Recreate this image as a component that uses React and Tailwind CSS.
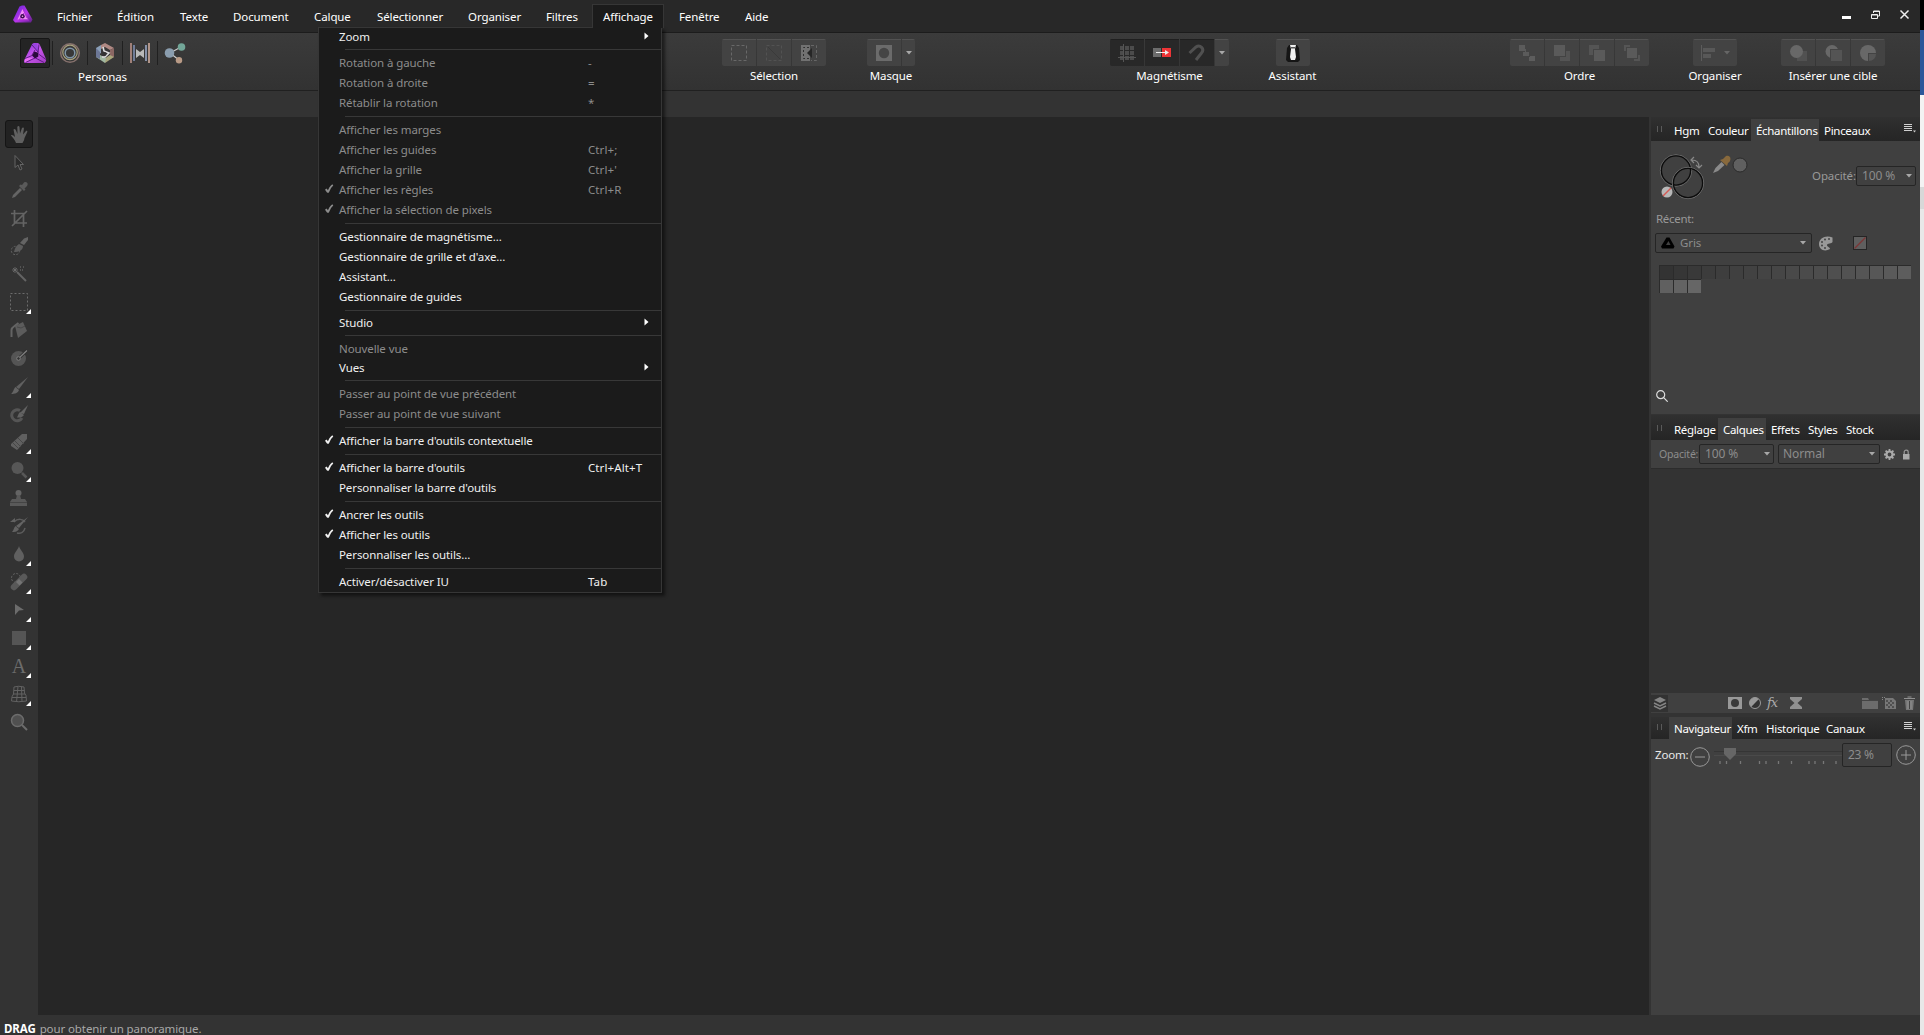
import React from "react";

const MENUS = [
  ["Fichier", "w-[60px]"], ["Édition", "w-[63px]"], ["Texte", "w-[53px]"], ["Document", "w-[81px]"],
  ["Calque", "w-[63px]"], ["Sélectionner", "w-[91px]"], ["Organiser", "w-[78px]"], ["Filtres", "w-[46px]"],
];

const VIEW_MENU = [
  { t: "Zoom", sub: true }, null,
  { t: "Rotation à gauche", k: "-", off: true },
  { t: "Rotation à droite", k: "=", off: true },
  { t: "Rétablir la rotation", k: "*", off: true }, null,
  { t: "Afficher les marges", off: true },
  { t: "Afficher les guides", k: "Ctrl+;", off: true },
  { t: "Afficher la grille", k: "Ctrl+'", off: true },
  { t: "Afficher les règles", k: "Ctrl+R", off: true, on: true },
  { t: "Afficher la sélection de pixels", off: true, on: true }, null,
  { t: "Gestionnaire de magnétisme..." },
  { t: "Gestionnaire de grille et d'axe..." },
  { t: "Assistant..." },
  { t: "Gestionnaire de guides" }, null,
  { t: "Studio", sub: true }, null,
  { t: "Nouvelle vue", off: true },
  { t: "Vues", sub: true }, null,
  { t: "Passer au point de vue précédent", off: true },
  { t: "Passer au point de vue suivant", off: true }, null,
  { t: "Afficher la barre d'outils contextuelle", on: true }, null,
  { t: "Afficher la barre d'outils", k: "Ctrl+Alt+T", on: true },
  { t: "Personnaliser la barre d'outils" }, null,
  { t: "Ancrer les outils", on: true },
  { t: "Afficher les outils", on: true },
  { t: "Personnaliser les outils..." }, null,
  { t: "Activer/désactiver IU", k: "Tab" },
];

function Check() {
  return (
    <svg width="9" height="10" viewBox="0 0 9 10" fill="none" stroke="currentColor">
      <path d="M0.8 5.2 3 8.2" strokeWidth="2" />
      <path d="M3 8.6C4 5 5.5 2.5 7.8 0.8" strokeWidth="1.6" />
    </svg>
  );
}

function DropMenu() {
  return (
    <div className="absolute left-[318px] top-[27px] z-10 w-[344px] border border-[#363636] bg-[#1b1b1b] shadow-[3px_3px_3px_rgba(0,0,0,0.5)]">
      {VIEW_MENU.map((m, i) =>
        m ? (
          <div key={i} className={`flex items-center pl-[6px] ${m.sub ? "h-[18px]" : "h-5"} ${m.off ? "text-[#8c8c8c]" : "text-[#f0f0f0]"}`}>
            <span className="w-[14px] -mt-[3px]">{m.on && <Check />}</span>
            <span className="-mt-px w-[249px]">{m.t}</span>
            {m.k && <span className="-mt-px tracking-[0.1px]">{m.k}</span>}
            {m.sub && (
              <svg className="ml-[56px] -mt-[3px]" width="5" height="8" viewBox="0 0 5 8"><path d="M0.5 0.5 4.5 4 0.5 7.5Z" fill="#fff" /></svg>
            )}
          </div>
        ) : (
          <div key={i} className="h-[7px] pl-[26px] pt-[3px]"><div className="h-px bg-[#383838]" /></div>
        )
      )}
    </div>
  );
}

function Logo({ size, id }) {
  return (
    <svg width={size} height={size} viewBox="0 0 24 24">
      <defs>
        <linearGradient id={id} x1="0" y1="0" x2="0.9" y2="1">
          <stop offset="0" stopColor="#7d2fd8" /><stop offset="0.5" stopColor="#c856ec" /><stop offset="1" stopColor="#a43cc4" />
        </linearGradient>
      </defs>
      <path d="M9 3.500Q9.500 2 11 2h3.500q1.500 0 2.200 1.500L23 18q.5 1.500-.5 3l-1 1H2.500Q1 22 1 20.500q0-1 .5-2Z" fill={`url(#${id})`} />
      <path d="M9 3.500 16 12l-2-10Z" fill="#9a44e0" />
      <path d="M2 22l8-5-8 0Z" fill="#e86cf5" />
      <path d="M9 4 15.500 11.500M16 3.500 15 11M23 18.500 15.500 13M21 21.500l-8.500-4.500M2.500 21.500l9.500-4.500M2 17.500l7-3M9 14 12 9" stroke="#46106e" strokeWidth="0.8" />
      <path d="M11.500 10.500 15.300 11.800 15.300 15.500 12 17.500 9 14.500Z" fill="#2a0a3c" />
    </svg>
  );
}

function AppLogo() {
  return (
    <svg width="22" height="20" viewBox="0 0 22 20">
      <defs>
        <linearGradient id="al" x1="0" y1="0" x2="1" y2="1">
          <stop offset="0" stopColor="#5a22d8" /><stop offset="0.55" stopColor="#b936ea" /><stop offset="1" stopColor="#5b1e83" />
        </linearGradient>
      </defs>
      <path d="M7.5 1.5 10 0.5h2.5l8 14-1.5 3H3L1 15Z" fill="url(#al)" />
      <path d="M10.5 4 16 14.5H5.500Z" fill="#f08cf5" />
      <path d="m7 15 5-7M17 15H8M11 4l4 9" stroke="#b02bd8" strokeWidth="1" />
      <circle cx="10.5" cy="11.3" r="2.2" fill="#3a0b52" /><circle cx="10.5" cy="11.3" r="0.8" fill="#f3a4e8" />
    </svg>
  );
}

function Personas() {
  const sep = <div className="h-6 w-px bg-[#202020]" />;
  return (
    <div className="ml-5 mt-[5px] w-[172px]">
      <div className="flex h-[30px] items-center">
        <div className="mr-[2px] flex size-[30px] items-center justify-center rounded-[2px] border border-[#161616] bg-[#242424]"><Logo size={24} id="pl" /></div>
        {sep}
        <div className="flex w-[34px] justify-center">
          <svg width="22" height="22" viewBox="0 0 22 22" fill="none">
            <circle cx="11" cy="11" r="9.3" stroke="#86716d" strokeWidth="1.5" />
            <circle cx="11" cy="10.4" r="7.2" stroke="#a9a27e" strokeWidth="1.2" />
            <circle cx="11" cy="11" r="4.8" stroke="#7f95a6" strokeWidth="1.5" />
          </svg>
        </div>
        {sep}
        <div className="flex w-[34px] justify-center">
          <svg width="20" height="22" viewBox="0 0 20 22">
            <path d="M1 6 6 3v8L1 14Z" fill="#8ba0b8" /><path d="M6 3 10 1l9 5-4 2-5-3-4 2Z" fill="#b08a84" />
            <path d="M19 6v9l-4 2V8Z" fill="#8b6763" /><path d="M19 15l-9 6-1-4 6-4Z" fill="#a9a67c" />
            <path d="M1 15l4-2 6 3-1 5Z" fill="#a0b8a2" /><path d="M1 6v9l4 2v-7Z" fill="#6c7796" />
            <path d="m8 5 1 4 5 2-4 4-3 0" stroke="#ddd" strokeWidth="1.600" fill="none" /><circle cx="9.500" cy="12" r="2" fill="#333" />
          </svg>
        </div>
        {sep}
        <div className="flex w-[34px] justify-center">
          <svg width="22" height="20" viewBox="0 0 22 20">
            <path d="M1 0h2v20H1Z" fill="#a08078" /><path d="M4 2h2v16H4Z" fill="#707c98" /><path d="M16 2h2v16h-2Z" fill="#8590a8" /><path d="M19 0h2v20h-2Z" fill="#b09488" />
            <path d="M7 6 11 9l4-3v9l-4-3-4 3Z" fill="#b9b9b9" />
          </svg>
        </div>
        {sep}
        <div className="flex w-[34px] justify-center">
          <svg width="22" height="22" viewBox="0 0 22 22">
            <path d="M6 11 17 5M6 11l9 7" stroke="#ccc" strokeWidth="1.2" />
            <circle cx="5.500" cy="11" r="4.8" fill="#8a9dae" /><circle cx="17.500" cy="5" r="3.8" fill="#72a698" /><circle cx="15" cy="18.300" r="3.2" fill="#b89a86" />
          </svg>
        </div>
      </div>
      <div className="mt-[1px] w-[165px] text-center leading-4">Personas</div>
    </div>
  );
}

function Group({ label, children, className }) {
  return (
    <div className={`mt-[6px] flex flex-col items-center ${className}`}>
      <div className="flex h-[27px] gap-px overflow-hidden rounded-[2px]">{children}</div>
      <div className="mt-[2px] whitespace-nowrap leading-4">{label}</div>
    </div>
  );
}

const LIT = "flex h-[27px] items-center justify-center border-t border-[#525252] bg-[#434343]";
const SUNK = "flex h-[27px] items-center justify-center border-t border-[#1f1f1f] bg-[#282828]";
const B34 = "w-[34px] ";
const Arrow = ({ c = "#a8a8a8" }) => (
  <svg width="6" height="4" viewBox="0 0 6 4"><path d="M0 0h6L3 3.5Z" fill={c} /></svg>
);
const I = ({ children, w = 18 }) => (
  <svg width={w} height="18" viewBox={`0 0 ${w} 18`} fill="none">{children}</svg>
);

function Toolbar() {
  return (
    <div className="flex h-[58px] border-b border-[#202020] bg-gradient-to-b from-[#3b3b3b] to-[#323232] text-white">
      <Personas />
      <Group label="Sélection" className="ml-[530px] w-[104px]">
        <div className={B34 + LIT}><I><rect x="1.500" y="1.500" width="15" height="15" stroke="#686868" strokeDasharray="3 2" /></I></div>
        <div className={B34 + LIT}><I><rect x="1.500" y="1.500" width="15" height="15" stroke="#525252" strokeDasharray="3 2" /><path d="m3 3 12 12" stroke="#3a3a3a" /></I></div>
        <div className={B34 + LIT}><I><path d="M1 1h9v16H1Z" fill="#717171" /><path d="M9 3.500H3.500v11H9" stroke="#303030" strokeDasharray="2 2" /><path d="M12 4v10L7 9Z" fill="#262626" /><path d="M11 1.500h5.500v15H11" stroke="#666" strokeDasharray="3 2" /></I></div>
      </Group>
      <Group label="Masque" className="ml-[40px] w-[50px]">
        <div className={B34 + LIT}><I><path d="M1 1h16v16H1Z" fill="#6b6b6b" /><circle cx="9" cy="9" r="5.2" fill="#454545" /></I></div>
        <div className={"w-[13px] " + LIT}><Arrow /></div>
      </Group>
      <Group label="Magnétisme" className="ml-[194px] w-[119px]">
        <div className={B34 + SUNK}><I><path d="M2 2h4v4H2ZM7 2h4v4H7ZM12 2h4v4h-4ZM2 7h4v4H2ZM7 7h4v4H7ZM12 7h4v4h-4ZM2 12h4v4H2ZM7 12h4v4H7ZM12 12h4v4h-4Z" fill="#4c4c4c" /><path d="M5.500 0v18M0 13.500h18" stroke="#555" /></I></div>
        <div className={B34 + SUNK}><I><path d="M0 4h8v9H0Z" fill="#6c6c6c" /><path d="M9 4h9v9H9Z" fill="#ee3436" /><path d="M3 8.500h10" stroke="#eee" /><path d="M12 6v5l4-2.500Z" fill="#eee" /></I></div>
        <div className={B34 + SUNK}><I><path d="m1.500 9 6.500-6c4-3 9 2 5.500 6L8 16" stroke="#505050" strokeWidth="3" /></I></div>
        <div className={"w-[14px] " + LIT}><Arrow /></div>
      </Group>
      <Group label="Assistant" className="ml-[46px] w-[35px]">
        <div className={B34 + LIT}><I><path d="M3 4 5 1h8l2 3 1 12-2 2H4l-2-2Z" fill="#151515" /><path d="M6 1h6l-1 4 1 8-1 3H7l-1-3 1-8Z" fill="#efefef" /><path d="M7 3h4v1.500H7Z" fill="#555" /></I></div>
      </Group>
      <Group label="Ordre" className="ml-[200px] w-[139px]">
        <div className={B34 + LIT}><I><path d="M1 1h6v6H1ZM8 5v3h3v4H5V8h2V5Z" fill="#5b5b5b" /><path d="M12 12h5v5h-6v-4h1Z" fill="#5d5d5d" /></I></div>
        <div className={B34 + LIT}><I><path d="M1 1h11v11H1Z" fill="#5a5a5a" /><path d="M13 7h4v10H7v-4h6Z" fill="#545454" /></I></div>
        <div className={B34 + LIT}><I><path d="M1 1h10v4H5v6H1Z" fill="#545454" /><path d="M6 6h11v11H6Z" fill="#5a5a5a" /></I></div>
        <div className={B34 + LIT}><I><path d="M1 1h6v2H3v4H1ZM17 17h-6v-2h4v-4h2Z" fill="#555" /><path d="M4 4h10v10H4Z" fill="#5a5a5a" /></I></div>
      </Group>
      <Group label="Organiser" className="ml-[44px] w-[44px]">
        <div className={"w-[44px] gap-2 " + LIT}><I w={16}><path d="M1.500 1v16" stroke="#5c5c5c" /><path d="M3 4h12v4H3ZM3 10h8v4H3Z" fill="#585858" /></I><Arrow c="#666" /></div>
      </Group>
      <Group label="Insérer une cible" className="ml-[44px] w-[104px]">
        <div className={B34 + LIT}><I><path d="M12 7h6v10H8v-4Z" fill="#515151" /><circle cx="7.500" cy="7.500" r="6.500" fill="#686868" /></I></div>
        <div className={B34 + LIT}><I><circle cx="8" cy="7.500" r="6.500" fill="#686868" /><path d="M6 5h12v12H6Z" fill="#434343" /><path d="M7 6h11v11H7Z" fill="#545454" /></I></div>
        <div className={B34 + LIT}><I><circle cx="9" cy="9" r="8" fill="#686868" /><path d="M9 9h9v8H9Z" fill="#434343" /><path d="M10 10h7a7 7 0 0 1-7 7Z" fill="#555" /></I></div>
      </Group>
    </div>
  );
}

const G = "#646464";
const TOOLS = [
  { p: <path d="M6 18C5 15 2.500 12 1 10.500c1-1 2.500 0 4 1.500L3.500 4.500c1-1 2-.5 2.500 1L7.500 9 7.300 2c.5-1.300 1.900-1.300 2.200 0l.5 6.500L12 3c.7-1 2-.6 1.900.7L13 9.500 16 6c1-.6 1.700.2 1.200 1.200L14.500 13c-.3 2-1 3.500-2 5Z" fill="#606060" /> },
  { p: <path d="M5 2.500v12l3-2.500 2 5 2-1-2-4.500h3.500Z" fill="#2c2c2c" stroke={G} /> },
  { p: <><path d="m2 17 1-3 7-7 2 2-7 7Z" fill={G} /><path d="m9 5 5 5 1.500-1.500-1-1 2.500-2.500c2-3-1-5-3-3.500L12 4l-1.500-.5Z" fill="#5a5a5a" /></> },
  { p: <path d="M4.500 1v13H17M1 4.500h12.500V18M2 17 17 2" stroke={G} strokeWidth="1.700" /> },
  { p: <><circle cx="5.500" cy="13.500" r="4.200" stroke={G} strokeDasharray="2 1.500" /><path d="M18 0v3l-4 5-4-2 4-4.500Z" fill={G} /><path d="M9 7l4 2c0 4-4 6-9 6 1-4 2-6 5-8Z" fill="#5c5c5c" /></> },
  { p: <><path d="m7 7 9 9" stroke={G} strokeWidth="2" /><path d="M5 2v6M2 5h6M3 3l4 4M7 3 3 7" stroke="#707070" strokeWidth=".8" /><path d="M10 2h1M13 2h1M12 5h1M10 5h1" stroke="#777" /></> },
  { p: <rect x="0.500" y="0.500" width="17" height="17" stroke="#6c6c6c" strokeDasharray="2 2" />, c: 1 },
  { p: <><path d="m5 5 8-4 4 9-9 7Z" fill="#5c5c5c" /><path d="M1.500 16V9q0-2 3-4l4-3" stroke={G} strokeWidth="2" /><path d="m7 6 4 1 4-2" stroke="#484848" /></> },
  { p: <><circle cx="8.500" cy="9.500" r="7.500" fill="#555" /><path d="M8.500 9.500 17 1.500" stroke="#2d2d2d" strokeWidth="3" /><path d="M8.500 9.500 17 1.500" stroke="#808080" strokeWidth="1.200" /><circle cx="8.500" cy="9.500" r="1.800" stroke="#808080" fill="#333" /></> },
  { p: <><path d="M18 0 9 12l-3-2Z" fill="#606060" /><path d="M5.500 10 9 13c-1 3-4 4-8 4 2-1 2.500-5 4.500-7Z" fill={G} /></>, c: 1 },
  { p: <><path d="M10 5.500A5.500 5.500 0 1 0 12 13" stroke="#555" strokeWidth="3" /><path d="M18 0 14 9l-4-1Z" fill={G} /><path d="m10 7 4 3c-2 3-4 2.500-7 2.500C8 11 8 9 10 7Z" fill="#626262" /></> },
  { p: <><path d="m1 11 11-10h5v5L7 17 1 13Z" fill="#606060" /><path d="m5 8 6 6M8 5l6 6M3 10l6 6" stroke="#474747" /></>, c: 1 },
  { p: <><circle cx="7.500" cy="7" r="6" fill="#575757" /><path d="m12 12 4.500 4.500" stroke="#575757" strokeWidth="2.500" /></>, c: 1 },
  { p: <><circle cx="8.500" cy="4" r="3" fill={G} /><path d="M7 6h3l1 4h4l2 3v4H0v-4l2-3h4Z" fill="#595959" /><path d="M0 13.500h17" stroke="#444" /></> },
  { p: <><path d="M4 5c4-4 9-3 11 0M15 11c-1 4-4 6-8 5" stroke="#5c5c5c" strokeWidth="1.500" /><path d="M18 0 9 11l-3-2Z" fill={G} /><path d="M5.500 9 9 12c-2 3-4 3-7 3 2-2 1.500-4 3.500-6ZM0 5h5V1Z" fill="#626262" /></> },
  { p: <path d="M9 1c1 4 5 6.500 5 10.500a5 5 0 0 1-10 0C4 7.500 8 5 9 1Z" fill="#606060" />, c: 1 },
  { p: <><circle cx="6" cy="5" r="4.500" stroke={G} strokeDasharray="2 1.500" /><path d="M4 14 14 4" stroke="#595959" strokeWidth="6.500" strokeLinecap="round" /><path d="m6 9 3-3 3.500 3.500-3 3Z" fill="#747474" /></>, c: 1 },
  { p: <path d="m5 3 9 6-5 .5L5 14Z" fill="#6c6c6c" />, c: 1 },
  { p: <path d="M2 2h14v14H2Z" fill="#555" />, c: 1 },
  { t: "A", c: 1 },
  { p: <path d="M4 2q4-1.500 10 0l.5 6q2 1 2 8-8 1.500-15 0 0-5 2-7ZM8 1.500 6.500 17M11.500 1.500 12 17M4 5.500h10.500M3 9h12M2 12.500h14" stroke="#626262" />, c: 1 },
  { p: <><circle cx="7.500" cy="7.500" r="6" fill="#505050" stroke="#6c6c6c" strokeWidth="1.500" /><path d="m12 12 5 5" stroke="#6c6c6c" strokeWidth="2" /></> },
];

function Tools() {
  return (
    <div className="flex w-[38px] flex-col items-center bg-[#333] pt-[3px]">
      {TOOLS.map((t, i) => (
        <div key={i} className={`relative flex size-7 items-center justify-center ${i === 0 ? "rounded-[3px] border border-[#151515] bg-[#222]" : ""}`}>
          {t.t ? (
            <span className="font-['Liberation_Serif'] text-[20px] text-[#6c6c6c]">{t.t}</span>
          ) : (
            <svg className="-mt-px" width="18" height="18" viewBox="0 0 18 18" fill="none">{t.p}</svg>
          )}
          {t.c && <svg className="absolute bottom-[2px] right-[2px]" width="5" height="5" viewBox="0 0 5 5"><path d="M5 0v5H0Z" fill="#fff" /></svg>}
        </div>
      ))}
    </div>
  );
}

function Tabs({ tabs, menu, className }) {
  return (
    <div className={`flex items-end bg-gradient-to-b from-[#303030] to-[#252525] tracking-[-0.3px] text-white ${className}`}>
      <div className="mb-[9px] ml-[6px] flex h-[6px] w-[5px] justify-between"><i className="w-px bg-[#5a5a5a]" /><i className="w-px bg-[#5a5a5a]" /></div>
      <div className="ml-[7px] flex">
        {tabs.map(([n, w, a]) => (
          <div key={n} className={`flex h-[22px] items-center whitespace-nowrap pl-[5px] pt-px ${w} ${a ? "bg-[#404040]" : ""}`}>{n}</div>
        ))}
      </div>
      {menu && (
        <svg className="mb-[8px] ml-auto mr-[4px]" width="12" height="9" viewBox="0 0 12 9"><path d="M0 .5h8M0 2.500h8M0 4.500h8M0 6.500h8" stroke="#d0d0d0" /><path d="M9 6.500h3L10.500 8.500Z" fill="#ccc" /></svg>
      )}
    </div>
  );
}

const BOX = "flex items-center justify-between rounded-[2px] border border-[#252525] bg-[#404040] text-[#8c8c8c]";
const GRAYS = [
  "bg-[#333]", "bg-[#363636]", "bg-[#393939]", "bg-[#3c3c3c]", "bg-[#3e3e3e]", "bg-[#404040]", "bg-[#424242]", "bg-[#444]", "bg-[#464646]",
  "bg-[#494949]", "bg-[#4b4b4b]", "bg-[#4d4d4d]", "bg-[#4f4f4f]", "bg-[#525252]", "bg-[#555]", "bg-[#575757]", "bg-[#5a5a5a]", "bg-[#5d5d5d]",
  "bg-[#606060]", "bg-[#636363]", "bg-[#666]",
];

function Swatches() {
  return (
    <div className="h-[273px] bg-[#404040] text-[#999]">
      <div className="flex h-[62px] pl-2 pt-3">
        <svg width="95" height="48" viewBox="0 0 95 48" fill="none">
          <circle cx="17" cy="17.500" r="15.700" stroke="#707070" /><circle cx="17" cy="17.500" r="14.600" stroke="#0c0c0c" strokeWidth="1.300" />
          <circle cx="29" cy="30" r="15.700" stroke="#707070" /><circle cx="29" cy="30" r="14.600" stroke="#0c0c0c" strokeWidth="1.300" />
          <path d="M33 7c5 0 7 2 7 7M35 4l-3 3 3 3M37 12l3 3 3-3" stroke="#888" strokeWidth="1.200" />
          <circle cx="8" cy="39" r="5.500" fill="#b8b8b8" /><path d="m4 43 8-8" stroke="#d65a55" strokeWidth="1.500" />
          <path d="m54 20 2.500-5 6-6 3 3-6.500 6Z" fill="#8a8a8a" /><path d="m61 7 7 6 1-3c4-2 3-9-2-7l-3 3Z" fill="#88693c" />
          <circle cx="81" cy="12" r="7" fill="#606060" stroke="#2a2a2a" />
        </svg>
        <span className="ml-[58px] mt-[15px] w-[44px] text-[#999]">Opacité:</span>
        <div className={BOX + " mt-[13px] h-5 w-[60px] shrink-0 px-[3px] pl-[5px] text-[12px]"}>100 %<Arrow /></div>
      </div>
      <div className="mt-[8px] h-[22px] pl-[5px] tracking-[-0.3px]">Récent:</div>
      <div className="flex h-5 items-center pl-[4px]">
        <div className={BOX + " h-5 w-[157px] px-[5px]"}>
          <span className="flex items-center gap-[5px]">
            <svg width="14" height="12" viewBox="0 0 14 12"><path d="M5.500.5h3l5 9-1 2H1L0 9.500Z" fill="#000" /><path d="M7.500 4 9.500 8H5Z" fill="#404040" /></svg>
            Gris
          </span>
          <Arrow />
        </div>
        <svg className="ml-[7px]" width="14" height="15" viewBox="0 0 14 15"><path d="M13.500 1.500C7-1.500 0 2 0 8s6 8 11 5c0-2-3-2-3-4s5-1 5.500-3Z" fill="#999" /><g fill="#444"><circle cx="6" cy="3.500" r="1" /><circle cx="3" cy="6" r="1" /><circle cx="3" cy="9.500" r="1" /><circle cx="6" cy="12" r="1" /><circle cx="10" cy="3" r="1" /></g></svg>
        <svg className="ml-5" width="14" height="14" viewBox="0 0 14 14"><rect x=".5" y=".5" width="13" height="13" fill="#5f5f5f" stroke="#252525" /><path d="M1.500 12.500 12.500 1.500" stroke="#7e3434" strokeWidth="1.200" /></svg>
      </div>
      <div className="ml-2 mt-3 flex w-[253px] flex-wrap">
        {GRAYS.map((g) => <div key={g} className={`h-[14px] w-[14px] border-l border-t border-[#2b2b2b] ${g}`} />)}
      </div>
      <svg className="ml-[5px] mt-[97px]" width="12" height="12" viewBox="0 0 12 12" fill="none" stroke="#ddd" strokeWidth="1.200"><circle cx="4.700" cy="4.700" r="4" /><path d="m7.700 7.700 4 4" /></svg>
    </div>
  );
}

const Bi = ({ children, className = "" }) => (
  <svg className={className} width="16" height="14" viewBox="0 0 16 14" fill="none">{children}</svg>
);

function Layers() {
  return (
    <>
      <div className="flex h-[29px] items-center border-b border-[#2c2c2c] bg-[#404040] pl-[8px] text-[#8c8c8c]">
        <span className="w-[40px] text-[10.500px] tracking-[-0.2px]">Opacité:</span>
        <div className={BOX + " h-5 w-[75px] pl-[5px] pr-[3px] text-[12px]"}>100 %<Arrow /></div>
        <div className={BOX + " ml-1 h-5 w-[102px] px-[4px] text-[12px]"}>Normal<Arrow /></div>
        <svg className="ml-[4px]" width="11" height="11" viewBox="0 0 11 11" fill="none"><circle cx="5.500" cy="5.500" r="3" stroke="#aaa" strokeWidth="2.200" /><path d="M5.500 0v2M5.500 9v2M0 5.500h2M9 5.500h2M1.600 1.600 3 3M8 8l1.400 1.400M1.600 9.400 3 8M8 3l1.400-1.400" stroke="#aaa" strokeWidth="1.800" /></svg>
        <svg className="ml-[7px]" width="8" height="11" viewBox="0 0 8 11" fill="none"><path d="M1 5h6.500v5.500H1Z" fill="#aaa" /><path d="M2.200 5V3c0-2.500 4-2.500 4 0v2" stroke="#999" strokeWidth="1.200" /></svg>
      </div>
      <div className="h-[224px] bg-[#333]" />
      <div className="flex h-5 items-center bg-[#404040]">
        <div className="flex h-[17px] w-[17px] items-center justify-center bg-[#323232]"><Bi><path d="m2 4 6-3 6 3-6 3Z" fill="#858585" /><path d="m2 7 6 3 6-3M2 10l6 3 6-3" stroke="#858585" strokeWidth="1.500" /></Bi></div>
        <Bi className="ml-[59px]"><path d="M1 1h14v12H1Z" fill="#999" /><circle cx="8" cy="7" r="4" fill="#3a3a3a" /></Bi>
        <Bi className="ml-[4px]"><circle cx="8" cy="7" r="5.500" stroke="#999" fill="#333" /><path d="M4.100 10.900A5.500 5.500 0 0 1 11.900 3.100Z" fill="#999" /></Bi>
        <span className="ml-[4px] w-[16px] font-['DejaVu_Serif'] text-[13px] italic leading-4 tracking-[-1px] text-[#aaa]">fx</span>
        <Bi className="ml-[5px]"><path d="M2 1h12v2L9.500 7 14 11v2H2v-2l4.500-4L2 3Z" fill="#909090" /></Bi>
        <Bi className="ml-[58px]"><path d="M0 2h6l1 2h9v9H0Z" fill="#6c6c6c" /><path d="M0 4.500h16" stroke="#444" /></Bi>
        <Bi className="ml-[3px]"><path d="M4 2h8l3 3v8H4Z" fill="#777" /><path d="M5 4h2v2H5ZM9 4h2v2H9ZM7 6h2v2H7ZM11 6h2v2h-2ZM5 8h2v2H5ZM9 8h2v2H9ZM7 10h2v2H7ZM11 10h2v2h-2Z" fill="#505050" /><path d="M1 1.500h4M1.500 1v4" stroke="#888" strokeDasharray="1 1" /></Bi>
        <Bi className="ml-[4px]"><path d="M4 4h9l-1 10H5Z" fill="#777" /><path d="M3 2.500h11M6.500 1h4M7 5v8M10 5v8" stroke="#909090" /><path d="M8.500 5v8" stroke="#444" /></Bi>
      </div>
    </>
  );
}

function Navigator() {
  return (
    <div className="flex-1 bg-[#404040] pl-[4px] pt-[4px]">
      <div className="flex h-6 items-center">
        <span className="-mt-px w-[35px] tracking-[-0.2px] text-[#e8e8e8]">Zoom:</span>
        <svg className="mt-1" width="20" height="20" viewBox="0 0 20 20" fill="none" stroke="#999"><circle cx="10" cy="10" r="9.300" /><path d="M5 10h10" /></svg>
        <svg className="ml-[4px]" width="128" height="22" viewBox="0 0 128 22">
          <path d="M0 7.500h128" stroke="#353535" /><path d="M0 11.500h128" stroke="#4a4a4a" />
          <path d="M10 4h12v6l-6 6-6-6Z" fill="#666" />
          <path d="M6 17v3M12.500 17v3M26.500 17v3M45.500 17v3M52 17v3M64.500 17v3M77.500 17v3M95 17v3M101 17v3M109.500 17v3M122 17v3" stroke="#777" strokeWidth="1.300" />
        </svg>
        <div className={BOX + " h-6 w-[50px] px-[5px] text-[12px] tracking-[-0.3px]"}>23 %</div>
        <svg className="ml-1" width="20" height="20" viewBox="0 0 20 20" fill="none" stroke="#999"><circle cx="10" cy="10" r="9.300" /><path d="M5 10h10M10 5v10" /></svg>
      </div>
    </div>
  );
}

export default function App() {
  return (
    <div className="flex h-[1035px] w-[1924px] overflow-hidden font-['Noto_Sans',sans-serif] text-[11.5px] leading-4 tracking-[-0.1px]">
      <div className="relative flex w-[1920px] flex-col bg-[#333]">
        <div className="flex h-[33px] border-b border-[#1c1c1c] bg-[#282828] text-white">
          <div className="w-[57px] pl-[12px] pt-[5px]"><AppLogo /></div>
          {MENUS.map(([n, w]) => <div key={n} className={`pt-[9px] ${w}`}>{n}</div>)}
          <div className="relative z-20 mt-1 h-[24px] w-[72px] border border-b-0 border-[#363636] bg-[#1b1b1b] pl-[10px] pt-[4px]">Affichage</div>
          <div className="ml-[15px] w-[66px] pt-[9px]">Fenêtre</div>
          <div className="pt-[9px]">Aide</div>
          <svg className="ml-auto mr-[10px] mt-[9px]" width="68" height="12" viewBox="0 0 68 12" fill="none" stroke="#eee">
            <path d="M0 8.500h9" stroke="#fff" strokeWidth="3" />
            <path d="M31.500 4V2h6v5h-2M31.500 2.500h6M29.500 5.500h6v4h-6ZM29.500 6h6" />
            <path d="m58.500 1.500 8 8M66.500 1.500l-8 8" strokeWidth="1.500" />
          </svg>
        </div>
        <DropMenu />
        <Toolbar />
        <div className="h-[26px] bg-[#333]" />
        <div className="flex h-[898px]">
          <Tools />
          <div className="flex-1 bg-[#262626]" />
          <div className="ml-[2px] flex w-[269px] flex-col">
            <Tabs className="h-6" menu tabs={[["Hgm", "w-[34px]"], ["Couleur", "w-[48px]"], ["Échantillons", "w-[68px]", true], ["Pinceaux", "w-[60px]"]]} />
            <Swatches />
            <Tabs className="mt-px h-[25px]" tabs={[["Réglage", "w-[49px]"], ["Calques", "w-[48px]", true], ["Effets", "w-[37px]"], ["Styles", "w-[38px]"], ["Stock", "w-[40px]"]]} />
            <Layers />
            <Tabs className="mt-[4px] h-[22px]" menu tabs={[["Navigateur", "w-[63px]", true], ["Xfm", "w-[29px]"], ["Historique", "w-[60px]"], ["Canaux", "w-[50px]"]]} />
            <Navigator />
          </div>
        </div>
        <div className="flex h-5 items-center gap-[4px] bg-[#333] pl-1 pt-[7px] text-[#a8a8a8]"><b className="text-white">DRAG</b> pour obtenir un panoramique.</div>
      </div>
      <div className="flex w-1 flex-col bg-[#e8e8e8]">
        <div className="h-[30px] bg-black" />
        <div className="h-[65px] bg-[#2b579a]" />
        <div className="h-[92px] bg-[#f3f3f3]" />
        <div className="h-[22px] bg-[#d8d8d8]" />
      </div>
    </div>
  );
}
